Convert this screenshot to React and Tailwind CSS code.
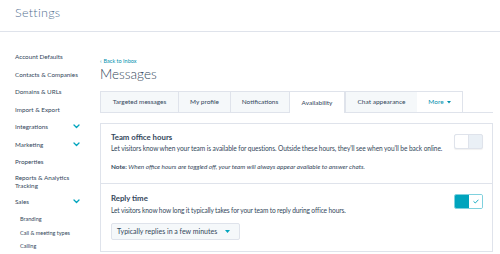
const navItems = [
  { label: "Account Defaults" },
  { label: "Contacts & Companies" },
  { label: "Domains & URLs" },
  { label: "Import & Export" },
  { label: "Integrations", chevron: true },
  { label: "Marketing", chevron: true },
  { label: "Properties" },
];

const tabs = [
  { label: "Targeted messages", w: "w-[78px]" },
  { label: "My profile", w: "w-[52px]" },
  { label: "Notifications", w: "w-[59px]" },
  { label: "Availability", w: "w-[56px]", active: true },
  { label: "Chat appearance", w: "w-[72px]" },
];

const Chevron = () => (
  <svg width="7" height="5" viewBox="0 0 7 5" fill="none">
    <path d="M1 1l2.5 2.5L6 1" stroke="#00a4bd" strokeWidth="1.3" strokeLinecap="round" strokeLinejoin="round" />
  </svg>
);

const NavItem = ({ label, chevron }) => (
  <div className="h-[17.5px] flex items-center justify-between whitespace-nowrap text-[6.3px] text-[#33475b]">
    <span>{label}</span>
    {chevron && <Chevron />}
  </div>
);

const App = () => {
  return (
    <div className="w-[500px] h-[254px] overflow-hidden bg-white text-[#33475b] font-['Lato',sans-serif]">
      <header className="h-[32px] border-b border-[#dfe3eb] px-[15px] pt-[5px]">
        <h1 className="text-[12.5px] leading-[16px] font-light text-[#516f90] tracking-[0.3px]">Settings</h1>
      </header>

      <div className="flex">
        <nav className="w-[100px] shrink-0 pl-[15px] pr-[20px] pt-[16px]">
          {navItems.map((item) => (
            <NavItem key={item.label} {...item} />
          ))}
          <div className="h-[22.5px] flex flex-col justify-center whitespace-nowrap text-[6.3px] leading-[7.5px]">
            <span>Reports &amp; Analytics</span>
            <span>Tracking</span>
          </div>
          <NavItem label="Sales" chevron />
          <div className="pl-[5px] pt-[2px] text-[5.5px] whitespace-nowrap">
            <div className="h-[13.5px] flex items-center">Branding</div>
            <div className="h-[13.5px] flex items-center">Call &amp; meeting types</div>
            <div className="h-[13.5px] flex items-center">Calling</div>
          </div>
        </nav>

        <main className="flex-1 pr-[7px] pt-[26px]">
          <div className="text-[5.5px] leading-[6px] text-[#0091ae] flex items-center gap-[2px]">
            <span>‹</span>
            <span>Back to Inbox</span>
          </div>
          <h2 className="mt-[3px] text-[13.5px] leading-[14px] font-light text-[#33475b]">Messages</h2>

          <div className="mt-[10px] flex h-[22px] border-b border-[#dfe3eb]">
            {tabs.map((t) => (
              <div
                key={t.label}
                className={
                  t.active
                    ? `${t.w} shrink-0 h-[22px] flex items-center justify-center text-[6.5px] bg-white border-t border-x border-[#dfe3eb] -mb-px`
                    : `${t.w} shrink-0 h-[21px] flex items-center justify-center text-[6.5px] bg-[#f5f8fa] border-t border-l border-[#dfe3eb]`
                }
              >
                {t.label}
              </div>
            ))}
            <div className="w-[46px] shrink-0 h-[21px] flex items-center justify-center gap-[3px] text-[6.5px] text-[#0091ae] bg-white border-t border-r border-[#dfe3eb]">
              <span>More</span>
              <svg width="4" height="3" viewBox="0 0 4 3">
                <path d="M0 0h4L2 2.5z" fill="#0091ae" />
              </svg>
            </div>
          </div>

          <section className="mt-[10px] border border-[#dfe3eb] bg-white">
            <div className="flex justify-between pl-[10px] pr-[9px] pt-[8px] pb-[12px] border-b border-[#dfe3eb]">
              <div>
                <div className="text-[7.8px] leading-[10px] font-bold">Team office hours</div>
                <p className="mt-[2px] text-[6.6px] leading-[8px] tracking-[-0.09px] whitespace-nowrap">
                  Let visitors know when your team is available for questions. Outside these hours, they'll see when you'll be back online.
                </p>
                <p className="mt-[11px] text-[6.4px] leading-[8px] italic whitespace-nowrap">
                  <span className="font-bold not-italic">Note:</span> When office hours are toggled off, your team will always appear available to answer chats.
                </p>
              </div>
              <div className="mt-[2px] flex h-[15px] w-[29px] shrink-0 rounded-[2px] border border-[#dfe3eb] bg-[#eaf0f6] shadow-[0_1px_1px_rgba(0,0,0,0.06)]">
                <div className="w-[14px] h-full bg-white border-r border-[#dfe3eb] rounded-l-[2px]" />
              </div>
            </div>

            <div className="flex justify-between pl-[10px] pr-[9px] pt-[9px] pb-[11px]">
              <div>
                <div className="text-[7.8px] leading-[10px] font-bold">Reply time</div>
                <p className="mt-[3px] text-[6.6px] leading-[8px] tracking-[-0.14px] whitespace-nowrap">
                  Let visitors know how long it typically takes for your team to reply during office hours.
                </p>
                <div className="mt-[9px] w-[129px] h-[17px] flex items-center justify-between pl-[5px] pr-[9px] text-[7px] bg-[#f5f8fa] border border-[#dfe3eb] rounded-[2px] whitespace-nowrap">
                  <span>Typically replies in a few minutes</span>
                  <svg width="5" height="3" viewBox="0 0 5 3">
                    <path d="M0 0h5L2.5 3z" fill="#00a4bd" />
                  </svg>
                </div>
              </div>
              <div className="mt-[1px] flex h-[15px] w-[29px] shrink-0 rounded-[2px] overflow-hidden border border-[#7fd1de]">
                <div className="w-[14px] h-full bg-[#00a4bd]" />
                <div className="flex-1 bg-white flex items-center justify-center">
                  <svg width="6" height="5" viewBox="0 0 6 5" fill="none">
                    <path d="M0.8 2.6l1.5 1.4L5.2 1" stroke="#00a4bd" strokeWidth="0.9" strokeLinecap="round" strokeLinejoin="round" />
                  </svg>
                </div>
              </div>
            </div>
          </section>
        </main>
      </div>
    </div>
  );
};

export default App;
